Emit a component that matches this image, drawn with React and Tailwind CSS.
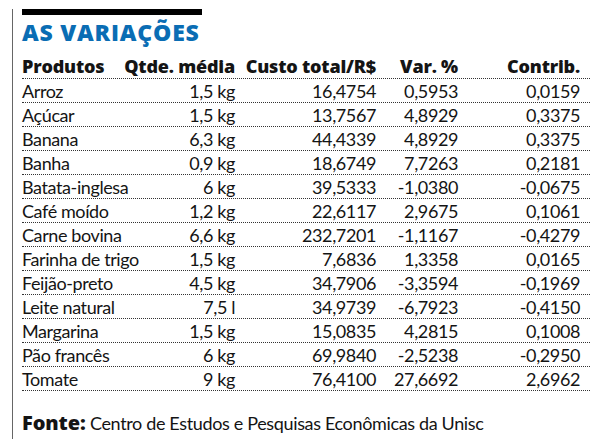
import React from "react";

const rows = [
  ["Arroz", "1,5 kg", "16,4754", "0,5953", "0,0159"],
  ["Açúcar", "1,5 kg", "13,7567", "4,8929", "0,3375"],
  ["Banana", "6,3 kg", "44,4339", "4,8929", "0,3375"],
  ["Banha", "0,9 kg", "18,6749", "7,7263", "0,2181"],
  ["Batata-inglesa", "6 kg", "39,5333", "-1,0380", "-0,0675"],
  ["Café moído", "1,2 kg", "22,6117", "2,9675", "0,1061"],
  ["Carne bovina", "6,6 kg", "232,7201", "-1,1167", "-0,4279"],
  ["Farinha de trigo", "1,5 kg", "7,6836", "1,3358", "0,0165"],
  ["Feijão-preto", "4,5 kg", "34,7906", "-3,3594", "-0,1969"],
  ["Leite natural", "7,5 l", "34,9739", "-6,7923", "-0,4150"],
  ["Margarina", "1,5 kg", "15,0835", "4,2815", "0,1008"],
  ["Pão francês", "6 kg", "69,9840", "-2,5238", "-0,2950"],
  ["Tomate", "9 kg", "76,4100", "27,6692", "2,6962"],
];

const grid =
  "grid grid-cols-[98px_115px_141px_82px_122px] w-[568px] pr-[10px] h-[24px] border-b border-dotted border-[#333] items-end whitespace-nowrap";

const bold = { fontFamily: "'Open Sans', Lato, sans-serif" };

const App = () => {
  return (
    <div
      className="w-[600px] h-[446px] bg-white pt-[3px] text-[#141414]"
      style={{ fontFamily: "Lato, 'Open Sans', sans-serif" }}
    >
      <div className="ml-[12px] h-[430px] border-l border-[#666] pl-[9px]">
        {/* black bar + title */}
        <div className="mt-[6px] h-[6px] w-[180px] bg-black" />
        <h1
          className="mt-[5px] text-[23px] leading-[25px] font-extrabold text-[#0a6db4] tracking-[0.8px]"
          style={bold}
        >
          AS VARIAÇÕES
        </h1>

        {/* table */}
        <div className="mt-[10px] text-[18px] leading-[22px]">
          <div
            className={`${grid} font-extrabold tracking-[-0.2px] pb-[2px]`}
            style={bold}
          >
            <span>Produtos</span>
            <span className="text-right">Qtde. média</span>
            <span className="text-right">Custo total/R$</span>
            <span className="text-right">Var. %</span>
            <span className="text-right">Contrib.</span>
          </div>
          {rows.map((r) => (
            <div key={r[0]} className={`${grid} tracking-[-0.4px]`}>
              <span>{r[0]}</span>
              <span className="text-right">{r[1]}</span>
              <span className="text-right">{r[2]}</span>
              <span className="text-right">{r[3]}</span>
              <span className="text-right">{r[4]}</span>
            </div>
          ))}
        </div>

        {/* source */}
        <p className="mt-[20px] text-[18px] leading-[24px] tracking-[-0.35px]">
          <strong className="font-extrabold text-[20px] tracking-[-0.1px]" style={bold}>
            Fonte:
          </strong>{" "}
          Centro de Estudos e Pesquisas Econômicas da Unisc
        </p>
      </div>
    </div>
  );
};

export default App;
